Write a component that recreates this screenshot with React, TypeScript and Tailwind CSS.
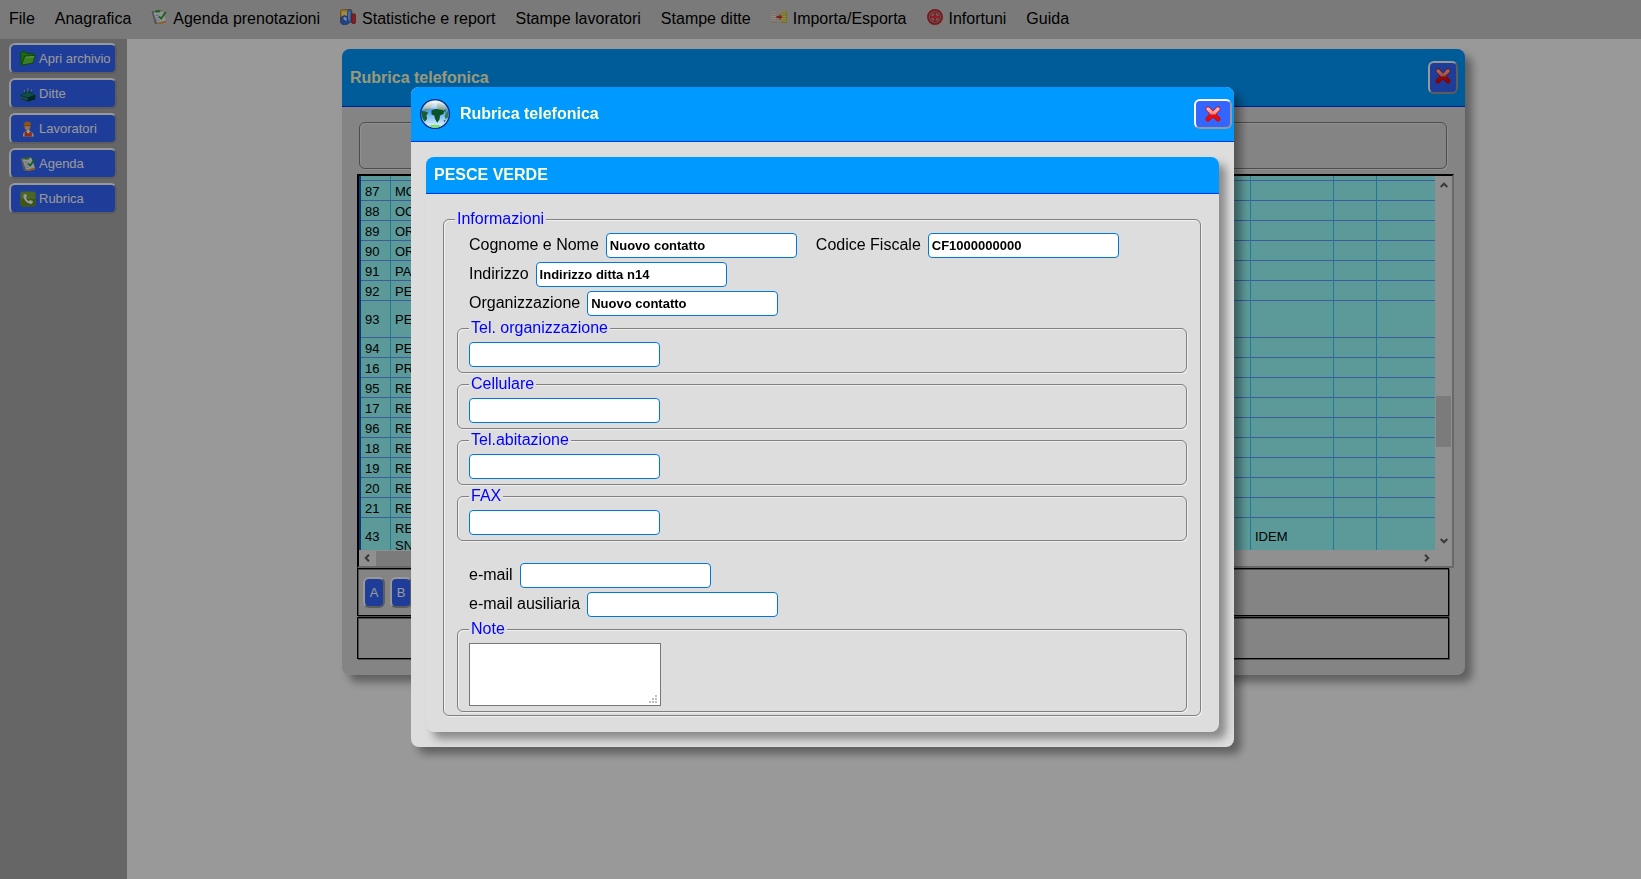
import type { ReactNode } from "react";

const AgendaIcon = () => (
  <svg viewBox="0 0 16 16" className="h-4 w-4 shrink-0" aria-hidden="true">
    <path d="M.8 2.6 11 1l2.6 12.4L4 15z" fill="#b98a4c" />
    <path d="M.6 2.6 3.4 2l3 12.2L4 15z" fill="#8a8f98" />
    <path d="m2.4 3.4 9-1.4 3.6 9.8-8.8 2.2z" fill="#eef3f8" />
    <path d="m6.2 14 8.8-2.4.4 1.8-7.2 1.9z" fill="#e8a04a" />
    <path d="M4.2 1.4 8.4.8l.8 2.4-4.2.6z" fill="#2fa043" />
    <path d="m4.6 6.6 3-.6M5.4 9.2l3-.6M6.2 11.6l2.4-.6" stroke="#8fa4bd" strokeWidth=".8" />
    <path d="m8 7.2 2.2 2.4L14.8 3" fill="none" stroke="#22a52e" strokeWidth="1.7" />
  </svg>
);

const ChartIcon = () => (
  <svg viewBox="0 0 16 16" className="h-4 w-4 shrink-0" aria-hidden="true">
    <rect x=".5" y=".5" width="11.500" height="13" rx="2" fill="#f7bf30" stroke="#c07a14" strokeWidth=".8" />
    <path d="M2 2.600h5.600v4H2z" fill="#ffe89a" />
    <path d="M.7 8.500 4.600 6.400l4.200 2.400v5.400l-2 1.300H2.500L.7 14z" fill="#3a6fe0" stroke="#1e48a6" strokeWidth=".6" />
    <path d="m3 9.400 1.800-1.600 2 1.400-.6 3z" fill="#dcebff" />
    <rect x="7.600" y=".6" width="4" height="13" rx="1.800" fill="#5797f5" stroke="#2354b5" strokeWidth=".7" />
    <path d="M9 2.500v8" stroke="#b9d6ff" strokeWidth=".9" />
    <rect x="11.700" y="4.800" width="3.900" height="9.800" rx="1.600" fill="#e23430" stroke="#98130f" strokeWidth=".7" />
  </svg>
);

const ImportIcon = () => (
  <svg viewBox="0 0 16 16" className="h-4 w-4 shrink-0" aria-hidden="true">
    <path d="M0 2h6v12H0z" fill="#c9b9a8" />
    <path d="M10 2h6v12h-6z" fill="#c2bc50" />
    <path d="M0 3h5.500M0 5.200h5.500M0 7.400h5.500M0 9.600h5.500M0 11.800h5.500" stroke="#f2ece0" strokeWidth="1.100" />
    <path d="M10 3h5M10 5.200h5M10 7.400h5M10 9.600h5M10 11.800h5" stroke="#f4ee6a" strokeWidth="1.100" />
    <path d="M5.400 7h3V5l3.200 3-3.200 3V9h-3z" fill="#e23434" />
  </svg>
);

const InjuryIcon = () => (
  <svg viewBox="0 0 16 16" className="h-4 w-4 shrink-0" aria-hidden="true">
    <circle cx="8" cy="8" r="7" fill="#a8a8a8" stroke="#d2252b" strokeWidth="2" />
    <circle cx="8" cy="8" r="4.7" fill="none" stroke="#c2252b" strokeWidth="1" />
    <path d="M6.8 4h2.400v2.800H12v2.400H9.200V12H6.800V9.200H4V6.800h2.800z" fill="#f0343a" />
  </svg>
);

const FolderIcon = () => (
  <svg viewBox="0 0 16 16" className="h-4 w-4 shrink-0" aria-hidden="true">
    <path d="M.6 1.800 1.600.8h4.200l1.200 1.600h6.400v2.800L3.600 13.800 1 13.600z" fill="#2fae1f" stroke="#146b0e" strokeWidth=".8" />
    <path d="M4.800 5.200 15.400 4.400l-2.600 7.800L1.400 14.200z" fill="#63d13e" stroke="#146b0e" strokeWidth=".9" />
    <path d="m5.600 6.300 8.400-.7" stroke="#c4f5a4" strokeWidth=".9" />
  </svg>
);

const FactoryIcon = () => (
  <svg viewBox="0 0 16 16" className="h-4 w-4 shrink-0" aria-hidden="true">
    <path d="M4.500 4v4M8 2v6M11.500 3.500V8" stroke="#9fc3c4" strokeWidth=".9" />
    <path d="M.6 8.600 4 7l1.400-2.400L7 7l2-2.600L10.600 7l1.400-2 .8 2.800 2.400 1v4.400L8 15.800.6 13z" fill="#0c5a58" />
    <path d="M.6 8.800 8 6.400l7.200 2.400L8 11.400z" fill="#1f8079" />
    <path d="M8 11.400v4.400l7.200-2.600V8.800z" fill="#053f3d" />
    <path d="M1.800 10.600v1.800M4 11.400v1.800M6.200 12.200V14" stroke="#7fd6c8" strokeWidth=".8" />
  </svg>
);

const WorkerIcon = () => (
  <svg viewBox="0 0 16 16" className="h-4 w-4 shrink-0" aria-hidden="true">
    <path d="M3 15.600c-.2-3.400 1-5.600 4.600-5.600s6.200 2 6.200 5.600z" fill="#f3ece4" />
    <path d="M4.600 10.600v5h7.200v-4.400l-1.800-.8-1.800 2.400-1.800-2.600z" fill="#e04a2a" />
    <path d="m6.400 10.200 1.800 2.600 1.800-2.400-.8-1.400H7z" fill="#fff" />
    <circle cx="7.400" cy="6.200" r="2.800" fill="#f3b98c" />
    <path d="M3.600 5C3.600 2 5.200.4 7.400.4s3.600 1.600 3.600 4z" fill="#f0901c" />
    <path d="M3 5.300c2.600-.9 5.600-1.100 8.400-.5" stroke="#b9620c" strokeWidth=".9" fill="none" />
  </svg>
);

const PhoneIcon = () => (
  <svg viewBox="0 0 16 16" className="h-4 w-4 shrink-0" aria-hidden="true">
    <rect x=".4" y=".4" width="15.2" height="15.2" rx="2.4" fill="#7da83a" />
    <path d="M.4 8h15.200v5.200a2.400 2.400 0 0 1-2.400 2.400H2.800A2.400 2.400 0 0 1 .4 13.200z" fill="#688f24" />
    <path
      d="M4.400 3.200 6 3l1 2.600-1.200 1.200c.6 1.400 1.600 2.600 3.200 3.400l1.200-1.200 2.600 1.200-.2 1.600c-.4.9-1.400 1.300-2.600 1-3.400-.9-5.800-3.600-6.500-6.800-.3-1.200 0-2.200.9-2.800z"
      fill="#fff"
    />
  </svg>
);

const CloseIcon = () => (
  <svg viewBox="0 0 16 16" className="h-4 w-4" aria-hidden="true">
    <defs>
      <linearGradient id="cross" gradientUnits="userSpaceOnUse" x1="0" y1="0" x2="0" y2="16">
        <stop offset="0" stopColor="#ffd0d0" />
        <stop offset=".48" stopColor="#ff8585" />
        <stop offset=".56" stopColor="#f01010" />
        <stop offset="1" stopColor="#e00000" />
      </linearGradient>
    </defs>
    <path d="m3 3 10 10M13 3 3 13" stroke="#c01020" strokeWidth="5" strokeLinecap="round" />
    <path d="m3 3 10 10M13 3 3 13" stroke="url(#cross)" strokeWidth="3.4" strokeLinecap="round" />
  </svg>
);

const GlobeIcon = () => (
  <svg viewBox="0 0 32 32" className="h-8 w-8 shrink-0" aria-hidden="true">
    <defs>
      <linearGradient id="sea" x1="0" y1="0" x2="0" y2="1">
        <stop offset="0" stopColor="#9fc0c8" />
        <stop offset=".4" stopColor="#4f9bf0" />
        <stop offset=".6" stopColor="#86c2fb" />
        <stop offset="1" stopColor="#f2fbff" />
      </linearGradient>
      <linearGradient id="shine" x1="0" y1="0" x2="0" y2="1">
        <stop offset="0" stopColor="#fff" stopOpacity=".95" />
        <stop offset="1" stopColor="#fff" stopOpacity=".3" />
      </linearGradient>
    </defs>
    <circle cx="16" cy="16" r="14.4" fill="url(#sea)" stroke="#0c2f8c" strokeWidth="1.4" />
    <path d="M2.400 13c2.200-.4 4.800.4 6.800 1.800l-1.800 2.600.8 3.400-2.200 3c-2.200-2-3.800-6-3.600-10.800z" fill="#14602f" />
    <path d="M4 10c2-4 5-6.200 8-7l2.500 3.500L11 10.500 7 13.500z" fill="#6f9484" />
    <path d="M12.500 12.500c3.500-2.300 9.500-2.500 13-.5l-1 4-3.500 1.500-.5 4-2.300 3.300-2.200-4-.7-3.300-2.800-1z" fill="#0a5228" />
    <path d="M18 4.500c4 0 7.800 2.500 9.800 6l-1.300 4-4-3-4.500-1z" fill="#3b7560" />
    <path d="m26.800 15 1.800-2 .8 3-.7 4-1.900 1-1.200-2.400zM24.400 22.400l2.400-1-1 3z" fill="#2f8048" />
    <path d="M9.500 27.800c4-1.300 9-1.300 13 0-3.500 2.600-9.500 2.600-13 0z" fill="#7be06a" />
    <path d="M3.600 11C5.800 5.600 10.400 2.700 16 2.700S26.200 5.600 28.400 11c-5 2-9.400.4-12.400-.2S8 10.400 3.600 11z" fill="url(#shine)" />
  </svg>
);

const menu: { label: string; icon?: ReactNode }[] = [
  { label: "File" },
  { label: "Anagrafica" },
  { label: "Agenda prenotazioni", icon: <AgendaIcon /> },
  { label: "Statistiche e report", icon: <ChartIcon /> },
  { label: "Stampe lavoratori" },
  { label: "Stampe ditte" },
  { label: "Importa/Esporta", icon: <ImportIcon /> },
  { label: "Infortuni", icon: <InjuryIcon /> },
  { label: "Guida" },
];

const shortcuts = [
  { label: "Apri archivio", icon: <FolderIcon /> },
  { label: "Ditte", icon: <FactoryIcon /> },
  { label: "Lavoratori", icon: <WorkerIcon /> },
  { label: "Agenda", icon: <AgendaIcon /> },
  { label: "Rubrica", icon: <PhoneIcon /> },
];

const contacts = [
  { id: "87", name: ["MO"] },
  { id: "88", name: ["OC"] },
  { id: "89", name: ["OR"] },
  { id: "90", name: ["OR"] },
  { id: "91", name: ["PA"] },
  { id: "92", name: ["PE"] },
  { id: "93", name: ["PE"], tall: true },
  { id: "94", name: ["PE"] },
  { id: "16", name: ["PR"] },
  { id: "95", name: ["RE"] },
  { id: "17", name: ["RE"] },
  { id: "96", name: ["RE"] },
  { id: "18", name: ["RE"] },
  { id: "19", name: ["RE"] },
  { id: "20", name: ["RE"] },
  { id: "21", name: ["RE"] },
  { id: "43", name: ["RE", "SN"], note: "IDEM", tall: true },
];

const phones = [
  { id: "tel-org", label: "Tel. organizzazione" },
  { id: "cell", label: "Cellulare" },
  { id: "tel-abit", label: "Tel.abitazione" },
  { id: "fax", label: "FAX" },
];

const raised =
  "rounded-md border-2 border-t-white border-l-white border-r-[#999999] border-b-[#999999] bg-[#3366ff] text-white";
const groove =
  "rounded-md border border-[#808080] shadow-[1px_1px_0_#f0f0f0,inset_1px_1px_0_#f0f0f0]";
const cell = "border-r border-b border-r-[#33ccff] border-b-[#6699ff] p-0 pt-px pl-1 align-middle";
const lastCell = "border-b border-[#6699ff] p-0";
const dropShadow = "shadow-[7px_7px_8px_rgba(0,0,0,0.38)]";
const inputStyle =
  "h-[25px] w-[191px] rounded border border-[#0078d7] bg-white px-[3px] text-[13px] font-bold text-black outline-none";

const Chevron = ({ d }: { d: string }) => (
  <svg viewBox="0 0 8 8" className="h-2 w-2 shrink-0" aria-hidden="true">
    <path d={d} fill="none" stroke="#606060" strokeWidth="2" />
  </svg>
);

const Field = ({ id, label, value = "" }: { id: string; label: string; value?: string }) => (
  <div className="flex items-center gap-[7px]">
    <label htmlFor={id} className="pb-[2px] leading-5">
      {label}
    </label>
    <input id={id} type="text" defaultValue={value} className={inputStyle} />
  </div>
);

const Group = ({ label, children }: { label: string; children: ReactNode }) => (
  <fieldset className={`mx-[2px] mb-[2px] px-[11px] py-[5px] ${groove}`}>
    <legend className="bg-[#dddddd] px-[2px] leading-[18px] text-[#0000ff]">{label}</legend>
    {children}
  </fieldset>
);

const ContactDialog = () => (
  <div className="fixed inset-0 flex items-start justify-center bg-black/40 pt-[87px] pl-1">
    <div
      role="dialog"
      aria-labelledby="dialog-title"
      className={`w-full max-w-[823px] rounded-lg bg-[#dddddd] ${dropShadow}`}
    >
      <div className="flex h-[55px] items-center rounded-t-lg border-b border-[#0033ff] bg-[#0099ff] pr-[2px] pl-2">
        <GlobeIcon />
        <h2 id="dialog-title" className="ml-[9px] flex-1 font-bold text-[#ffffcc]">
          Rubrica telefonica
        </h2>
        <button type="button" aria-label="Chiudi" className={`flex h-[30px] w-[38px] items-center justify-center ${raised}`}>
          <CloseIcon />
        </button>
      </div>

      <div className="p-[15px]">
        <div className={`rounded-lg ${dropShadow}`}>
          <h3 className="h-[37px] rounded-t-lg border-b border-[#0033ff] bg-[#0099ff] px-2 leading-9 font-bold text-[#ffffcc]">
            PESCE VERDE
          </h3>
          <form className="pt-4 pr-[18px] pb-4 pl-[17px]">
            <fieldset className={`px-[11px] pt-[3px] pb-px ${groove}`}>
              <legend className="bg-[#dddddd] px-[2px] leading-[18px] text-[#0000ff]">Informazioni</legend>
              <div className="mb-px flex flex-col gap-1 px-[14px] py-[2px]">
                <div className="flex gap-[19px]">
                  <Field id="nome" label="Cognome e Nome" value="Nuovo contatto" />
                  <Field id="cf" label="Codice Fiscale" value="CF1000000000" />
                </div>
                <Field id="indirizzo" label="Indirizzo" value="Indirizzo ditta n14" />
                <Field id="organizzazione" label="Organizzazione" value="Nuovo contatto" />
              </div>

              {phones.map((phone) => (
                <Group key={phone.id} label={phone.label}>
                  <input id={phone.id} type="text" aria-label={phone.label} className={`block ${inputStyle}`} />
                </Group>
              ))}

              <div className="mt-5 mb-px flex flex-col gap-1 px-[14px] py-[2px]">
                <Field id="email" label="e-mail" />
                <Field id="email2" label="e-mail ausiliaria" />
              </div>

              <Group label="Note">
                <div className="relative w-[192px]">
                  <textarea
                    aria-label="Note"
                    className="block h-[63px] w-full resize-none border border-[#767676] bg-white p-[2px] text-[13px]"
                  />
                  <svg viewBox="0 0 8 8" className="pointer-events-none absolute right-1 bottom-[3px] h-2 w-2" aria-hidden="true">
                    <path d="M6 0h2v2H6zM3 3h2v2H3zM6 3h2v2H6zM0 6h2v2H0zM3 6h2v2H3zM6 6h2v2H6z" fill="#bfbfbf" />
                  </svg>
                </div>
              </Group>
            </fieldset>
          </form>
        </div>
      </div>
    </div>
  </div>
);

const PhoneBook = () => (
  <section className={`mt-[10px] mr-[176px] ml-[215px] rounded-lg bg-[#dddddd] ${dropShadow}`}>
    <div className="flex h-[58px] items-center rounded-t-lg border-b border-[#0033ff] bg-[#0099ff] pr-[7px] pl-2">
      <h2 className="flex-1 font-bold text-[#ffffcc]">Rubrica telefonica</h2>
      <button type="button" aria-label="Chiudi" className={`flex h-[33px] w-[30px] items-center justify-center pb-1 ${raised}`}>
        <CloseIcon />
      </button>
    </div>

    <div className="px-[15px] pt-[15px] pb-4">
      <div className={`mr-[3px] ml-[2px] h-[47px] ${groove}`} />

      <div className="mt-[5px] -mr-1 border-2 border-t-black border-r-[#b0b0b0] border-b-[#b0b0b0] border-l-black">
        <div className="flex h-[374px]">
          <div className="flex-1 overflow-hidden border-l-2 border-[#0066cc] bg-[#99ffff]">
            <table className="w-full table-fixed border-separate border-spacing-0 text-[13px] leading-[17px]">
              <colgroup>
                <col className="w-[30px]" />
                <col />
                <col className="w-[83px]" />
                <col className="w-[43px]" />
                <col className="w-[58px]" />
              </colgroup>
              <tbody>
                <tr className="h-[5px]">
                  <td className={cell} />
                  <td className={cell} />
                  <td className={cell} />
                  <td className={cell} />
                  <td className={lastCell} />
                </tr>
                {contacts.map((row) => (
                  <tr key={row.id} className={row.tall ? "h-[37px]" : "h-5"}>
                    <td className={cell}>{row.id}</td>
                    <td className={cell}>
                      {row.name.map((line) => (
                        <div key={line}>{line}</div>
                      ))}
                    </td>
                    <td className={cell}>{row.note}</td>
                    <td className={cell} />
                    <td className={lastCell} />
                  </tr>
                ))}
              </tbody>
            </table>
          </div>
          <div className="flex w-[17px] flex-col items-center bg-[#f0f0f0] pt-[5px] pb-[5px]">
            <Chevron d="M0.700 6 4 2.700 7.300 6" />
            <div className="mt-[207px] h-[51px] w-[15px] bg-[#cdcdcd]" />
            <div className="flex-1" />
            <Chevron d="M0.700 2 4 5.300 7.300 2" />
          </div>
        </div>
        <div className="flex h-4 items-center bg-[#f0f0f0] pr-[21px] pl-1">
          <Chevron d="M6 0.700 2.700 4 6 7.300" />
          <div className="ml-[5px] h-[15px] w-[300px] bg-[#cdcdcd]" />
          <div className="flex-1" />
          <Chevron d="M2 0.700 5.300 4 2 7.300" />
        </div>
      </div>

      <div className="mr-px flex h-12 items-center gap-[5px] border border-black px-[5px] pt-px shadow-[1px_1px_0_#808080,inset_1px_1px_0_#808080]">
        {["A", "B"].map((letter) => (
          <button key={letter} type="button" className={`h-[31px] w-[22px] text-[13px] ${raised}`}>
            {letter}
          </button>
        ))}
      </div>
      <div className="mt-px mr-px h-[42px] border border-black shadow-[1px_1px_0_#808080,inset_1px_1px_0_#808080]" />
    </div>
  </section>
);

const App = () => (
  <div className="flex min-h-screen flex-col bg-white font-['Liberation_Sans',Arial,sans-serif] text-base text-black">
    <nav className="flex h-[39px] items-center gap-5 bg-[#cccccc] pb-[2px] pl-[9px]">
      {menu.map((item) => (
        <a key={item.label} href="#" className="flex items-center gap-[6px] whitespace-nowrap">
          {item.icon && <span className="-mt-1">{item.icon}</span>}
          {item.label}
        </a>
      ))}
    </nav>

    <div className="flex flex-1">
      <aside className="flex w-[127px] shrink-0 flex-col gap-1 bg-[#aaaaaa] px-[9px] pt-1">
        {shortcuts.map((item) => (
          <button
            key={item.label}
            type="button"
            className={`flex h-[31px] w-[108px] items-center gap-[3px] pl-[9px] text-[13px] whitespace-nowrap ${raised}`}
          >
            {item.icon}
            {item.label}
          </button>
        ))}
      </aside>
      <main className="min-w-0 flex-1">
        <PhoneBook />
      </main>
    </div>

    <ContactDialog />
  </div>
);

export default App;
